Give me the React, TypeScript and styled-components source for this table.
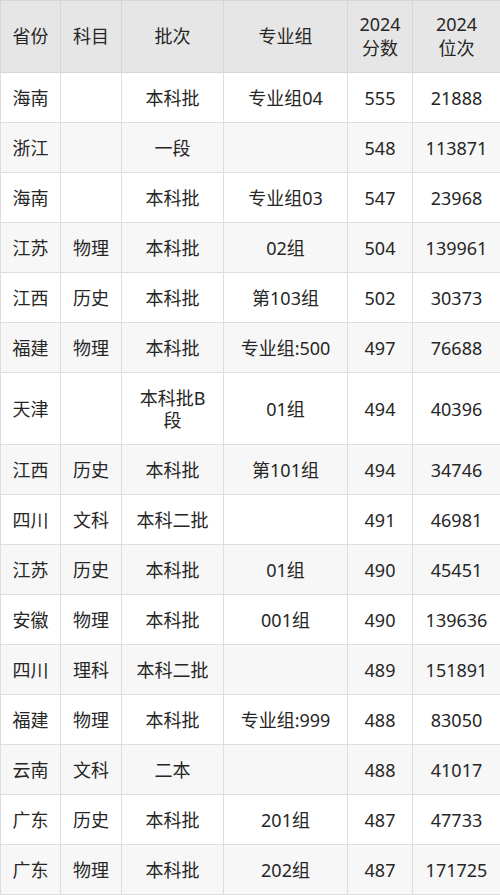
import React from 'react';
import styled, { createGlobalStyle } from 'styled-components';

type Row = [string, string, string, string, string, string];

const rows: Row[] = [
  ['海南', '', '本科批', '专业组04', '555', '21888'],
  ['浙江', '', '一段', '', '548', '113871'],
  ['海南', '', '本科批', '专业组03', '547', '23968'],
  ['江苏', '物理', '本科批', '02组', '504', '139961'],
  ['江西', '历史', '本科批', '第103组', '502', '30373'],
  ['福建', '物理', '本科批', '专业组:500', '497', '76688'],
  ['天津', '', '本科批B段', '01组', '494', '40396'],
  ['江西', '历史', '本科批', '第101组', '494', '34746'],
  ['四川', '文科', '本科二批', '', '491', '46981'],
  ['江苏', '历史', '本科批', '01组', '490', '45451'],
  ['安徽', '物理', '本科批', '001组', '490', '139636'],
  ['四川', '理科', '本科二批', '', '489', '151891'],
  ['福建', '物理', '本科批', '专业组:999', '488', '83050'],
  ['云南', '文科', '二本', '', '488', '41017'],
  ['广东', '历史', '本科批', '201组', '487', '47733'],
  ['广东', '物理', '本科批', '202组', '487', '171725'],
];

const widths = [60, 61, 102, 124, 65, 88];
const pads = [4, 4, 12, 4, 4, 4];

const GlobalStyle = createGlobalStyle`
  html, body {
    margin: 0;
    padding: 0;
    background: #ffffff;
  }
  body {
    font-family: "Noto Sans", "Noto Sans CJK SC", sans-serif;
  }
`;

const App: React.FC = () => {
  return (
    <>
      <GlobalStyle />
      <Table>
        <colgroup>
          {widths.map((w, i) => (
            <col key={i} style={{ width: w }} />
          ))}
        </colgroup>
        <thead>
          <tr>
            <HeadCell>省份</HeadCell>
            <HeadCell>科目</HeadCell>
            <HeadCell>批次</HeadCell>
            <HeadCell>专业组</HeadCell>
            <HeadCell>2024<br />分数</HeadCell>
            <HeadCell>2024<br />位次</HeadCell>
          </tr>
        </thead>
        <tbody>
          {rows.map((r, i) => (
            <BodyRow key={i} striped={i % 2 === 1}>
              {r.map((c, j) => (
                <Cell key={j} pad={pads[j]}>{c}</Cell>
              ))}
            </BodyRow>
          ))}
        </tbody>
      </Table>
    </>
  );
};

const Table = styled.table`
  width: 500px;
  table-layout: fixed;
  border-collapse: collapse;
  color: #262626;
  font-size: 18px;
`;

const HeadCell = styled.th`
  font-weight: 400;
  line-height: 24px;
  background-color: #e6e6e6;
  border: 1px solid #d6d6d6;
  padding: 11px 4px 12px;
  text-align: center;
`;

const BodyRow = styled.tr<{ striped: boolean }>`
  background-color: ${({ striped }) => (striped ? '#f7f7f7' : '#ffffff')};
`;

const Cell = styled.td<{ pad: number }>`
  border: 1px solid #dedede;
  line-height: 22px;
  padding: 14px ${({ pad }) => pad}px 13px;
  text-align: center;
  word-break: break-all;
`;

export default App;
